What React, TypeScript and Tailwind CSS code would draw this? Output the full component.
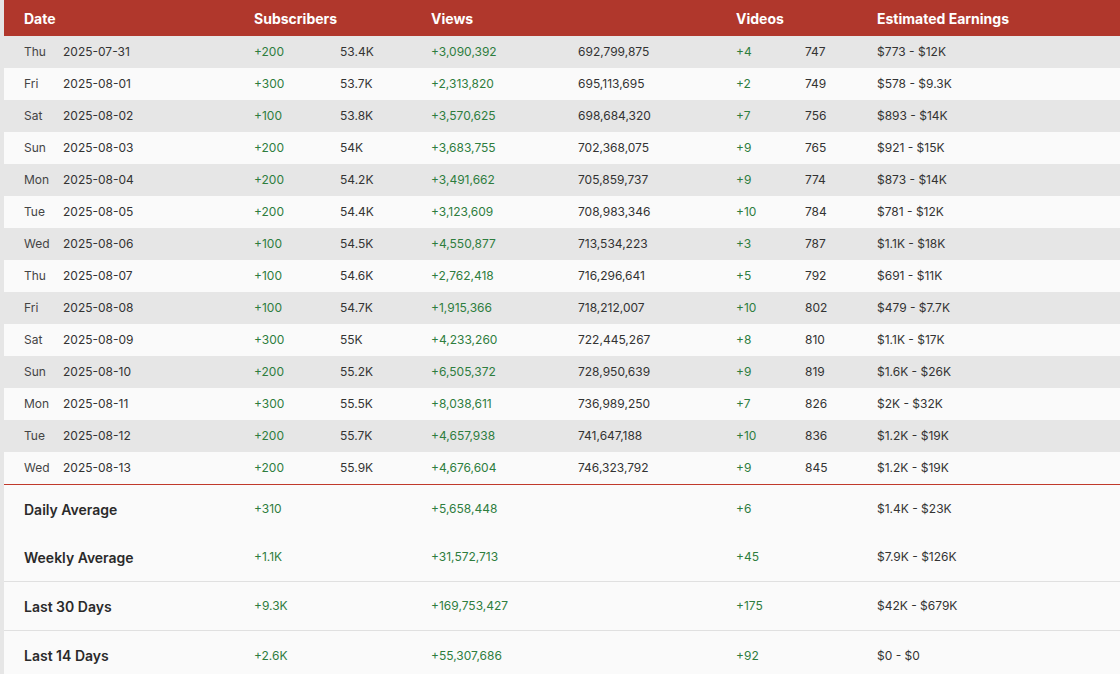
const rows = [
  ["Thu", "2025-07-31", "+200", "53.4K", "+3,090,392", "692,799,875", "+4", "747", "$773 - $12K"],
  ["Fri", "2025-08-01", "+300", "53.7K", "+2,313,820", "695,113,695", "+2", "749", "$578 - $9.3K"],
  ["Sat", "2025-08-02", "+100", "53.8K", "+3,570,625", "698,684,320", "+7", "756", "$893 - $14K"],
  ["Sun", "2025-08-03", "+200", "54K", "+3,683,755", "702,368,075", "+9", "765", "$921 - $15K"],
  ["Mon", "2025-08-04", "+200", "54.2K", "+3,491,662", "705,859,737", "+9", "774", "$873 - $14K"],
  ["Tue", "2025-08-05", "+200", "54.4K", "+3,123,609", "708,983,346", "+10", "784", "$781 - $12K"],
  ["Wed", "2025-08-06", "+100", "54.5K", "+4,550,877", "713,534,223", "+3", "787", "$1.1K - $18K"],
  ["Thu", "2025-08-07", "+100", "54.6K", "+2,762,418", "716,296,641", "+5", "792", "$691 - $11K"],
  ["Fri", "2025-08-08", "+100", "54.7K", "+1,915,366", "718,212,007", "+10", "802", "$479 - $7.7K"],
  ["Sat", "2025-08-09", "+300", "55K", "+4,233,260", "722,445,267", "+8", "810", "$1.1K - $17K"],
  ["Sun", "2025-08-10", "+200", "55.2K", "+6,505,372", "728,950,639", "+9", "819", "$1.6K - $26K"],
  ["Mon", "2025-08-11", "+300", "55.5K", "+8,038,611", "736,989,250", "+7", "826", "$2K - $32K"],
  ["Tue", "2025-08-12", "+200", "55.7K", "+4,657,938", "741,647,188", "+10", "836", "$1.2K - $19K"],
  ["Wed", "2025-08-13", "+200", "55.9K", "+4,676,604", "746,323,792", "+9", "845", "$1.2K - $19K"],
];

// label, subs, views, videos, earnings, row classes
const summary = [
  ["Daily Average", "+310", "+5,658,448", "+6", "$1.4K - $23K", "h-[48px]"],
  ["Weekly Average", "+1.1K", "+31,572,713", "+45", "$7.9K - $126K", "h-[49px] border-b border-[#e0e0e0]"],
  ["Last 30 Days", "+9.3K", "+169,753,427", "+175", "$42K - $679K", "h-[49px] border-b border-[#e0e0e0]"],
  ["Last 14 Days", "+2.6K", "+55,307,686", "+92", "$0 - $0", "h-[49px]"],
];

const green = "text-[#2e7d3e]";

export default function App() {
  return (
    <div
      className="min-h-[674px] bg-[#e6e6e6] pl-[4px]"
      style={{ fontFamily: "Inter, 'Noto Sans', sans-serif" }}
    >
      <div className="bg-[#fafafa]">
        <div className="flex h-[36px] items-center bg-[#b0372c] pl-[20px] text-[14px] font-bold text-white">
          <div className="w-[230px]">Date</div>
          <div className="w-[177px]">Subscribers</div>
          <div className="w-[305px]">Views</div>
          <div className="w-[141px]">Videos</div>
          <div>Estimated Earnings</div>
        </div>

        {rows.map((r, i) => (
          <div
            key={i}
            className={`flex h-[32px] items-center pl-[20px] text-[12px] text-[#333] ${
              i % 2 === 0 ? "bg-[#e6e6e6]" : "bg-[#fafafa]"
            }`}
          >
            <div className="w-[39px] text-[#444]">{r[0]}</div>
            <div className="w-[191px]">{r[1]}</div>
            <div className={`w-[86px] ${green}`}>{r[2]}</div>
            <div className="w-[91px]">{r[3]}</div>
            <div className={`w-[147px] ${green}`}>{r[4]}</div>
            <div className="w-[158px]">{r[5]}</div>
            <div className={`w-[69px] ${green}`}>{r[6]}</div>
            <div className="w-[72px]">{r[7]}</div>
            <div>{r[8]}</div>
          </div>
        ))}

        <div className="h-px bg-[#c0392b]" />

        {summary.map((s, i) => (
          <div key={i} className={`flex items-center pl-[20px] text-[12px] ${s[5]}`}>
            <div className="w-[230px] text-[14px] font-semibold text-[#2a2a2a]">{s[0]}</div>
            <div className={`w-[177px] ${green}`}>{s[1]}</div>
            <div className={`w-[305px] ${green}`}>{s[2]}</div>
            <div className={`w-[141px] ${green}`}>{s[3]}</div>
            <div className="text-[#333]">{s[4]}</div>
          </div>
        ))}
      </div>
    </div>
  );
}
